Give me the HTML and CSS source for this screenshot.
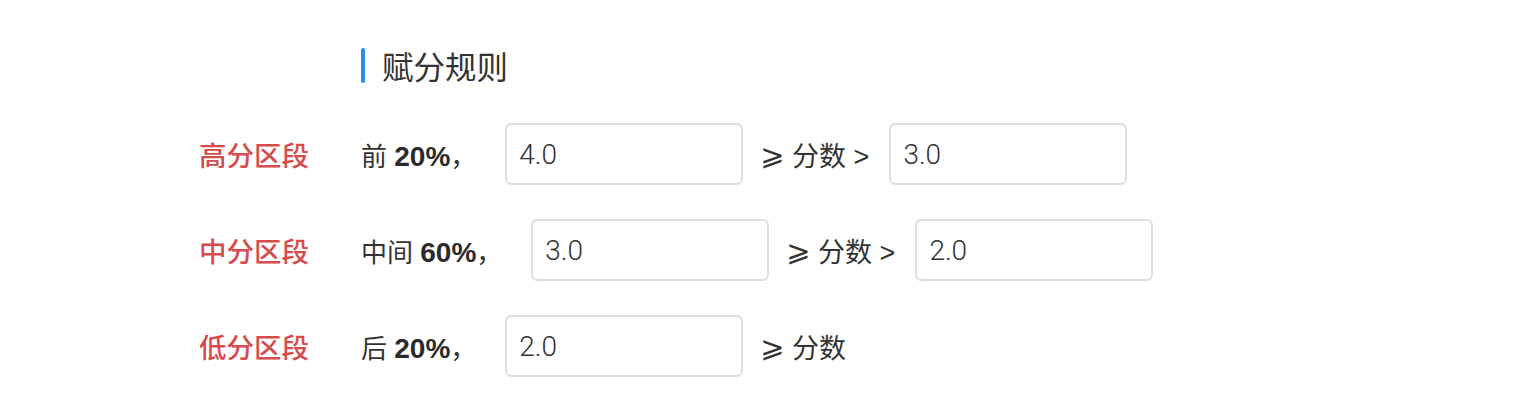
FILE: index.html
```html
<!DOCTYPE html>
<html lang="zh-CN">
<head>
<meta charset="utf-8">
<link rel="stylesheet" href="styles.css">
</head>
<body>
<div class="page">
  <div class="title-row">
    <span class="title-bar"></span>
    <span class="title">赋分规则</span>
  </div>
  <div class="rule">
    <div class="label">高分区段</div>
    <div class="content">
      <span class="desc">前 <b>20%</b>，</span>
      <input class="field" type="text" value="4.0">
      <span class="op"><span class="ge">⩾</span> 分数 &gt;</span>
      <input class="field" type="text" value="3.0">
    </div>
  </div>
  <div class="rule">
    <div class="label">中分区段</div>
    <div class="content">
      <span class="desc">中间 <b>60%</b>，</span>
      <input class="field" type="text" value="3.0">
      <span class="op"><span class="ge">⩾</span> 分数 &gt;</span>
      <input class="field" type="text" value="2.0">
    </div>
  </div>
  <div class="rule">
    <div class="label">低分区段</div>
    <div class="content">
      <span class="desc">后 <b>20%</b>，</span>
      <input class="field" type="text" value="2.0">
      <span class="op"><span class="ge">⩾</span> 分数</span>
    </div>
  </div>
</div>
</body>
</html>
```
FILE: styles.css
```css
html, body {
  margin: 0;
  padding: 0;
  background: #ffffff;
}
body {
  font-family: "Liberation Sans", "Noto Sans CJK SC", sans-serif;
  color: #333333;
}
.page {
  padding: 47px 0 0 199px;
}
.title-row {
  display: flex;
  align-items: center;
  margin-left: 162px;
  height: 36px;
}
.title-bar {
  width: 4px;
  height: 35px;
  border-radius: 2px;
  background: #2590f0;
  margin-right: 17px;
}
.title {
  font-family: "Noto Sans CJK SC", sans-serif;
  font-size: 31.5px;
  color: #333;
  line-height: 36px;
}
.rule {
  display: grid;
  grid-template-columns: 162px auto;
  align-items: center;
  height: 62px;
  margin-top: 34px;
}
.title-row + .rule {
  margin-top: 40px;
}
.label {
  font-family: "Noto Sans CJK SC", sans-serif;
  font-size: 27.5px;
  font-weight: 500;
  color: #d64b4b;
}
.content {
  display: flex;
  align-items: center;
  font-size: 26px;
}
.desc {
  font-family: "Liberation Sans", "Noto Sans CJK SC", sans-serif;
  margin-right: 29px;
}
.desc b {
  font-size: 28px;
  font-weight: 700;
  color: #2b2b2b;
}
.op {
  font-family: "Liberation Sans", "Noto Sans CJK SC", sans-serif;
  font-size: 27px;
  margin: 0 20px 0 17px;
  white-space: nowrap;
}
.ge {
  display: inline-block;
  font-family: "DejaVu Sans", sans-serif;
  font-size: 29px;
  line-height: 1;
  vertical-align: 1px;
}
.field {
  box-sizing: border-box;
  width: 238px;
  height: 62px;
  border: 2px solid #dedede;
  border-radius: 6px;
  padding: 0 0 0 12px;
  font-family: "Roboto", "Liberation Sans", sans-serif;
  font-weight: 300;
  font-size: 28px;
  color: #333;
  background: #fff;
  outline: none;
}
```
